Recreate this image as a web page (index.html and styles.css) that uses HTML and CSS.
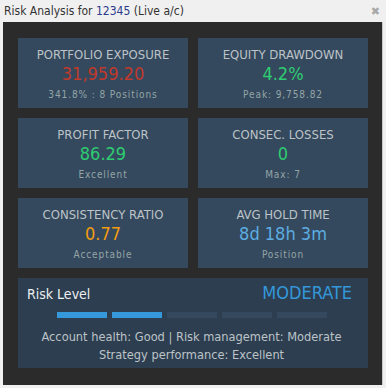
FILE: index.html
```html
<!DOCTYPE html>
<html>
<head>
<meta charset="utf-8">
<link rel="stylesheet" href="styles.css">
</head>
<body>
<div class="window">
  <div class="titlebar">
    <span class="title">Risk Analysis for <span class="acct">12345</span> (Live a/c)</span>
    <span class="close">&#10006;</span>
  </div>
  <div class="panel">
    <div class="grid">
      <div class="card">
        <div class="label">PORTFOLIO EXPOSURE</div>
        <div class="value red">31,959.20</div>
        <div class="sub">341.8% : 8 Positions</div>
      </div>
      <div class="card">
        <div class="label">EQUITY DRAWDOWN</div>
        <div class="value green">4.2%</div>
        <div class="sub">Peak: 9,758.82</div>
      </div>
      <div class="card">
        <div class="label">PROFIT FACTOR</div>
        <div class="value green">86.29</div>
        <div class="sub">Excellent</div>
      </div>
      <div class="card">
        <div class="label">CONSEC. LOSSES</div>
        <div class="value green">0</div>
        <div class="sub">Max: 7</div>
      </div>
      <div class="card">
        <div class="label">CONSISTENCY RATIO</div>
        <div class="value orange">0.77</div>
        <div class="sub">Acceptable</div>
      </div>
      <div class="card">
        <div class="label">AVG HOLD TIME</div>
        <div class="value blue">8d 18h 3m</div>
        <div class="sub">Position</div>
      </div>
    </div>
    <div class="risk">
      <div class="risk-head">
        <span class="risk-title">Risk Level</span>
        <span class="risk-value">MODERATE</span>
      </div>
      <div class="bars">
        <span class="bar on"></span>
        <span class="bar on"></span>
        <span class="bar"></span>
        <span class="bar"></span>
        <span class="bar"></span>
      </div>
      <div class="risk-text">Account health: Good | Risk management: Moderate<br>Strategy performance: Excellent</div>
    </div>
  </div>
</div>
</body>
</html>
```
FILE: styles.css
```css
html, body {
  margin: 0;
  padding: 0;
  background: #f0f0f0;
}
.window {
  width: 386px;
  height: 388px;
  font-family: "DejaVu Sans Condensed", "DejaVu Sans", sans-serif;
}
.titlebar {
  height: 22px;
  display: flex;
  align-items: center;
  justify-content: space-between;
  padding: 0 6px 0 4px;
  box-sizing: border-box;
}
.title {
  font-size: 12px;
  color: #333;
}
.acct {
  color: #2b3a8c;
}
.close {
  font-size: 11px;
  color: #a8a8a8;
  font-family: "DejaVu Sans", sans-serif;
}
.panel {
  margin: 0 3px;
  height: 363px;
  box-sizing: border-box;
  background: #2b2b2b;
  border-right: 1px solid #c8c8c8;
  padding: 16px 14px 0 15px;
}
.grid {
  display: grid;
  grid-template-columns: 170px 170px;
  grid-auto-rows: 70px;
  gap: 10px;
}
.card {
  background: #34495e;
  display: flex;
  flex-direction: column;
  align-items: center;
  padding-top: 9px;
  box-sizing: border-box;
}
.label {
  font-size: 13px;
  line-height: 16px;
  color: #bdc3c7;
}
.value {
  font-size: 18px;
  line-height: 22px;
  margin-top: 0;
}
.sub {
  font-size: 10px;
  line-height: 14px;
  color: #95a5a6;
  letter-spacing: 0.9px;
  margin-top: 3px;
}
.red { color: #c0392b; }
.green { color: #2ecc71; }
.orange { color: #f39c12; }
.blue { color: #5dade2; }
.risk {
  margin-top: 10px;
  width: 350px;
  height: 90px;
  background: #2c3e50;
  box-sizing: border-box;
  padding: 4px 16px 0 9px;
}
.risk-head {
  display: flex;
  justify-content: space-between;
  align-items: baseline;
}
.risk-title {
  font-size: 14px;
  color: #ecf0f1;
}
.risk-value {
  font-size: 18px;
  color: #3498db;
}
.bars {
  display: flex;
  justify-content: center;
  gap: 5px;
  margin-top: 9px;
  padding-left: 5px;
}
.bar {
  width: 50px;
  height: 6px;
  background: #34495e;
}
.bar.on {
  background: #3498db;
}
.risk-text {
  margin-top: 10px;
  text-align: center;
  font-size: 12.7px;
  line-height: 18px;
  color: #bdc3c7;
  padding-left: 4px;
}
```
